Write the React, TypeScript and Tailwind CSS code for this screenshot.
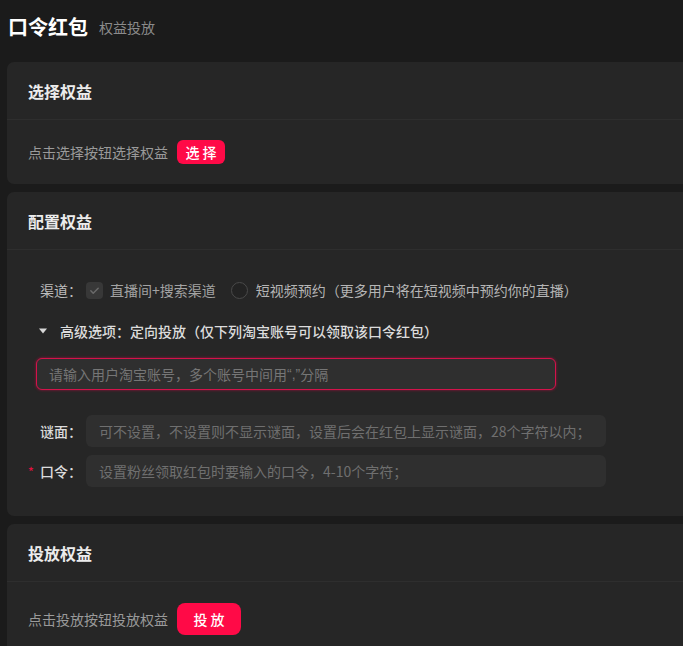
import React from "react";

const font = { fontFamily: '"Noto Sans CJK SC", "Noto Sans", sans-serif' };

function Card({ title, children }: { title: string; children: React.ReactNode }) {
  return (
    <div className="w-[720px] rounded-[7px] bg-[#262626]">
      <div className="flex h-[58px] items-center border-b border-[#2e2e2e] pl-[21px] text-[16px] font-bold text-[#ececec]">
        {title}
      </div>
      {children}
    </div>
  );
}

export default function App() {
  return (
    <div className="min-h-screen overflow-hidden bg-[#1b1b1b] leading-[20px]" style={font}>
      <div className="flex h-[52px] items-center pl-[8px] pt-[1px]">
        <span className="text-[20px] font-bold text-white">口令红包</span>
        <span className="ml-[11px] text-[14px] text-[#8b8b8b]">权益投放</span>
      </div>
      <div className="mt-[10px] flex flex-col gap-[8px] pl-[7px]">
        <Card title="选择权益">
          <div className="flex h-[64px] items-center pl-[21px]">
            <span className="text-[14px] text-[#9a9a9a]">点击选择按钮选择权益</span>
            <button className="ml-[9px] flex h-[24px] w-[48px] items-center justify-center rounded-[6px] bg-[#ff0a47] pl-[3px] text-[14px] font-medium tracking-[3px] text-white">
              选择
            </button>
          </div>
        </Card>
        <Card title="配置权益">
          <div className="pb-[29px] pl-[29px] pt-[30px] text-[14px]">
            <div className="flex h-[20px] items-center pl-[4px]">
              <span className="text-[#bdbdbd]">渠道：</span>
              <span className="ml-[4px] flex h-[17px] w-[17px] items-center justify-center rounded-[4px] bg-[#383838]">
                <svg width="11" height="11" viewBox="0 0 12 12" fill="none">
                  <path d="M2 6.3l2.6 2.6L10 3.5" stroke="#6a6a6a" strokeWidth="1.6" strokeLinecap="round" strokeLinejoin="round" />
                </svg>
              </span>
              <span className="ml-[7px] text-[#a3a3a3]">直播间+搜索渠道</span>
              <span className="ml-[15px] h-[17px] w-[17px] rounded-full border border-[#4a4a4a] bg-[#232323]" />
              <span className="ml-[8px] text-[#b5b5b5]">短视频预约（更多用户将在短视频中预约你的直播）</span>
            </div>
            <div className="mt-[21px] flex h-[20px] items-center">
              <svg width="10" height="8" viewBox="0 0 10 8" className="ml-[2px]">
                <path d="M1 1.5h8L5 6.5z" fill="#d8d8d8" />
              </svg>
              <span className="ml-[12px] font-medium text-[#dcdcdc]">高级选项：定向投放（仅下列淘宝账号可以领取该口令红包）</span>
            </div>
            <div className="mt-[17px] flex h-[32px] w-[520px] items-center rounded-[6px] border-[1.5px] border-[#d3134b] bg-[#2f2f2f] pl-[12px] text-[#767676] shadow-[0_0_3px_#a0103c]">
              请输入用户淘宝账号，多个账号中间用
              <span style={{ fontFamily: '"Liberation Sans", sans-serif' }}>“,”</span>
              分隔
            </div>
            <div className="mt-[25px] flex items-center">
              <span className="w-[50px] pl-[4px] font-medium text-[#dcdcdc]">谜面：</span>
              <div className="flex h-[32px] w-[520px] items-center rounded-[6px] bg-[#2f2f2f] pl-[13px] text-[#6f6f6f]">
                可不设置，不设置则不显示谜面，设置后会在红包上显示谜面，28个字符以内；
              </div>
            </div>
            <div className="mt-[8px] flex items-center">
              <span className="ml-[-8px] flex w-[58px] items-center font-medium text-[#dcdcdc]">
                <span className="w-[12px] text-[12px] text-[#e0103f]">*</span>口令：
              </span>
              <div className="flex h-[32px] w-[520px] items-center rounded-[6px] bg-[#2f2f2f] pl-[13px] text-[#6f6f6f]">
                设置粉丝领取红包时要输入的口令，4-10个字符；
              </div>
            </div>
          </div>
        </Card>
        <Card title="投放权益">
          <div className="flex h-[74px] items-center pl-[21px]">
            <span className="text-[14px] text-[#9a9a9a]">点击投放按钮投放权益</span>
            <button className="ml-[9px] flex h-[32px] w-[64px] items-center justify-center rounded-[8px] bg-[#ff0a47] pl-[3px] text-[14px] font-medium tracking-[3px] text-white">
              投放
            </button>
          </div>
        </Card>
      </div>
    </div>
  );
}
